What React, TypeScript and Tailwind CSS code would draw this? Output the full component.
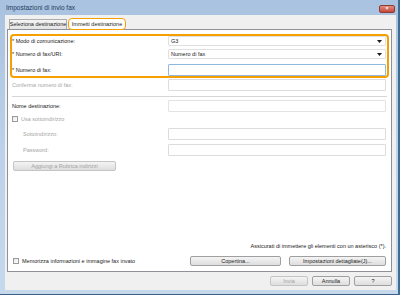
import React from "react";

function Caret() {
  return (
    <svg width="5" height="3" viewBox="0 0 5 3" className="shrink-0">
      <path d="M0 0h5L2.5 3z" fill="#1a1a1a" />
    </svg>
  );
}

function Select({ value }: { value: string }) {
  return (
    <div className="w-[218px] h-[10px] flex items-center justify-between pl-[2px] pr-[3px] bg-white border border-[#e0e0e0] rounded-[1px]">
      <span className="text-[5.5px] text-[#222]">{value}</span>
      <Caret />
    </div>
  );
}

function Input({ active, disabled }: { active?: boolean; disabled?: boolean }) {
  return (
    <div
      className={
        "w-[218px] h-full bg-white rounded-[1px] border " +
        (active ? "border-[#8fb8e0]" : disabled ? "border-[#dcdcdc]" : "border-[#e3e3e3]")
      }
    />
  );
}

function Checkbox() {
  return <div className="w-[6px] h-[6px] shrink-0 border border-[#9a9a9a] bg-gradient-to-br from-[#e6e6e6] to-white" />;
}

function Button({ label, disabled, className }: { label: string; disabled?: boolean; className: string }) {
  return (
    <div
      className={
        "h-[10px] flex items-center justify-center whitespace-nowrap rounded-[2px] border text-[5.5px] bg-gradient-to-b from-[#f4f4f4] to-[#dedede] " +
        (disabled ? "border-[#c4c4c4] text-[#a3a3a3]" : "border-[#9f9f9f] text-[#222]") +
        " " +
        className
      }
    >
      {label}
    </div>
  );
}

function Row({ label, gray, children, h }: { label: string; gray?: boolean; children: React.ReactNode; h: string }) {
  return (
    <div className={"flex items-center justify-between " + h}>
      <span className={"text-[5.5px] whitespace-nowrap " + (gray ? "text-[#a6a6a6]" : "text-[#222]")}>{label}</span>
      {children}
    </div>
  );
}

export default function App() {
  return (
    <div
      className="w-[400px] h-[295px] flex flex-col bg-gradient-to-b from-[#a9c2df] via-[#bcd1ea] to-[#c6d8ec] border-r-[2px] border-r-[#3f6c92] border-b border-b-[#3c5f83] overflow-hidden"
      style={{ fontFamily: '"Liberation Sans", Arial, sans-serif' }}
    >
      {/* title bar */}
      <div className="h-[15px] shrink-0 flex items-center justify-between pl-[6px] pr-[3px]">
        <span className="text-[6.5px] text-[#1c3a5e]">Impostazioni di invio fax</span>
        <div className="w-[16px] h-[8px] mt-[2px] rounded-[2px] bg-gradient-to-b from-[#e08d80] to-[#c4453a] border border-[#8d3b33] flex items-center justify-center">
          <span className="text-[5px] leading-none text-white font-bold">×</span>
        </div>
      </div>

      {/* client */}
      <div className="flex-1 ml-[5px] mr-[2px] mb-[4px] bg-[#f0f0f0] flex flex-col pl-[2px] pr-[4px]">
        {/* tabs */}
        <div className="h-[14px] shrink-0 flex items-end pl-[2px]">
          <div className="w-[58px] h-[10px] flex items-center justify-center whitespace-nowrap border border-b-0 border-[#adadad] bg-gradient-to-b from-[#f4f4f4] to-[#e4e4e4] text-[5.5px] text-[#222]">
            Seleziona destinazione
          </div>
          <div className="ml-[1px] w-[58px] h-[12px] mb-[-1px] flex items-center justify-center whitespace-nowrap rounded-[4px] border-[1.5px] border-[#f5a000] bg-white text-[5.5px] text-[#222] relative z-10">
            Immetti destinazione
          </div>
        </div>

        {/* panel */}
        <div className="flex-1 bg-white border border-[#8e9199] flex flex-col px-[2px]">
          <div className="mt-[4px] h-[44px] rounded-[4px] border-2 border-[#f5a000] flex flex-col pr-[1px]">
            <Row label="* Modo di comunicazione:" h="h-[10px]">
              <Select value="G3" />
            </Row>
            <Row label="* Numero di fax/URI:" h="h-[10px] mt-[3px]">
              <Select value="Numero di fax" />
            </Row>
            <Row label="* Numero di fax:" h="h-[12px] mt-[5px]">
              <Input active />
            </Row>
          </div>

          <div className="pl-[2px] pr-[3px] flex flex-col">
            <Row label="Conferma numero di fax:" gray h="h-[12px] mt-[1px]">
              <Input disabled />
            </Row>
          </div>

          <div className="mt-[5px] mx-[2px] h-px bg-[#d6d6d6]" />

          <div className="pl-[2px] pr-[3px] flex flex-col">
            <Row label="Nome destinazione:" h="h-[12px] mt-[3px]">
              <Input />
            </Row>
            <div className="mt-[3px] h-[8px] flex items-center gap-[3px]">
              <Checkbox />
              <span className="text-[5.5px] text-[#a6a6a6]">Usa sottoindirizzo</span>
            </div>
            <div className="pl-[11px] flex flex-col">
              <Row label="Sottoindirizzo:" gray h="h-[12px] mt-[5px]">
                <Input disabled />
              </Row>
              <Row label="Password:" gray h="h-[12px] mt-[4px]">
                <Input disabled />
              </Row>
            </div>
            <Button label="Aggiungi a Rubrica indirizzi" disabled className="mt-[5px] ml-[1px] w-[103px]" />
          </div>

          <div className="flex-1" />

          <div className="pr-[3px] h-[8px] flex items-center justify-end whitespace-nowrap text-[5.5px] text-[#222]">
            Assicurati di immettere gli elementi con un asterisco (*).
          </div>
          <div className="mt-[6px] mb-[5px] h-[10px] pl-[3px] pr-[3px] flex items-center">
            <Checkbox />
            <span className="ml-[3px] text-[5.5px] whitespace-nowrap text-[#222]">Memorizza informazioni e immagine fax invato</span>
            <div className="flex-1" />
            <Button label="Copertina..." className="w-[91px]" />
            <Button label="Impostazioni dettagliate(J)..." className="ml-[8px] w-[97px]" />
          </div>
        </div>

        {/* dialog buttons */}
        <div className="h-[18px] shrink-0 flex items-center justify-end gap-[4px]">
          <Button label="Invia" disabled className="w-[38px]" />
          <Button label="Annulla" className="w-[38px]" />
          <Button label="?" className="w-[38px]" />
        </div>
      </div>
    </div>
  );
}
